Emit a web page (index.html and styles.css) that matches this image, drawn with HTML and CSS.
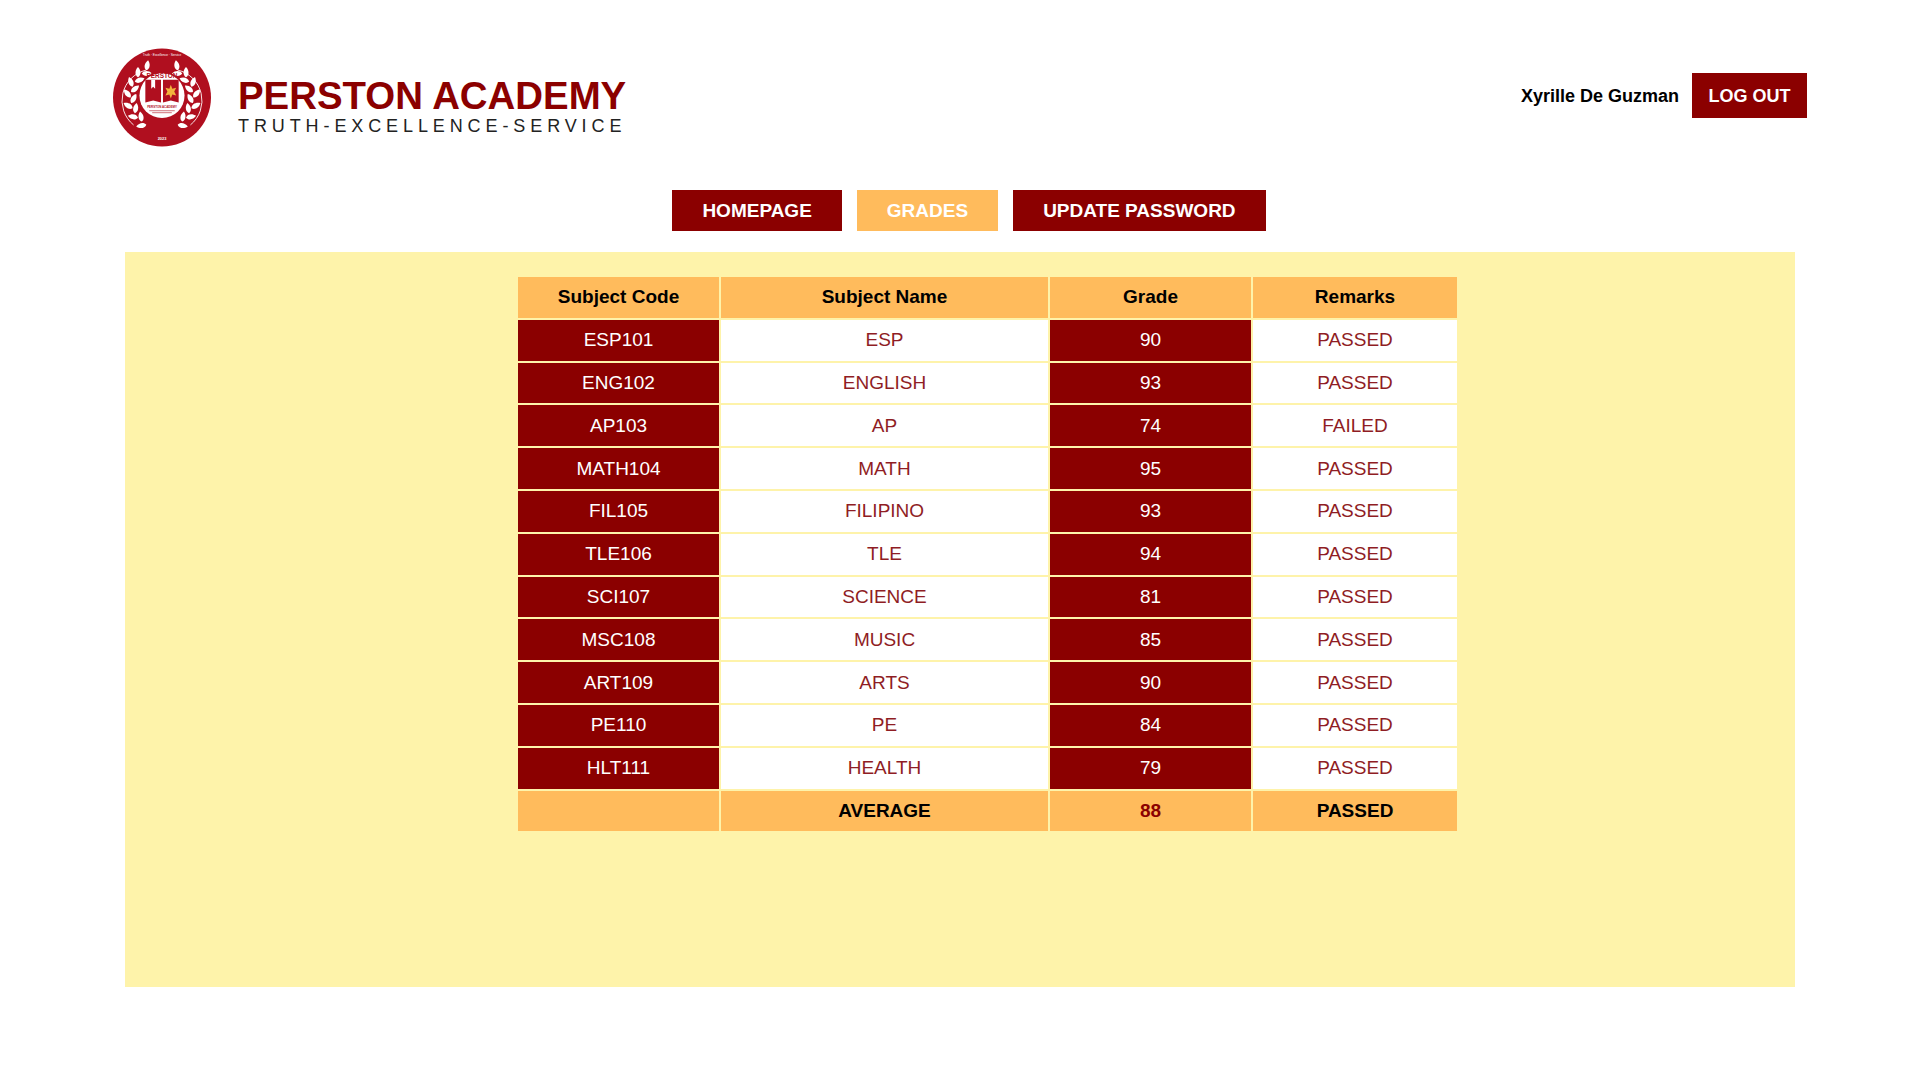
FILE: index.html
```html
<!DOCTYPE html>
<html lang="en">
  <head>
    <meta charset="UTF-8" />
    <meta name="viewport" content="width=device-width, initial-scale=1.0" />
    <title>Perston Academy - Grades</title>
    <link rel="stylesheet" href="styles.css">
  </head>
  <body>
    <header class="top-bar">
      <div class="brand">
        <svg class="logo" viewBox="0 0 100 100" aria-hidden="true">
          <defs>
            <path id="leaf" d="M0 0C3.4-2 3.4-7 0-10.5C-3.4-7-3.4-2 0 0Z" fill="#fff" />
            <g id="branch">
              <path d="M21 78A32 32 0 0 1 34 22" fill="none" stroke="#fff" stroke-width="0.9" />
              <use href="#leaf" transform="rotate(-150 50 50) translate(50 18) rotate(50)" />
              <use href="#leaf" transform="rotate(-130 50 50) translate(50 18) rotate(50)" />
              <use href="#leaf" transform="rotate(-110 50 50) translate(50 18) rotate(50)" />
              <use href="#leaf" transform="rotate(-90 50 50) translate(50 18) rotate(50)" />
              <use href="#leaf" transform="rotate(-70 50 50) translate(50 18) rotate(50)" />
              <use href="#leaf" transform="rotate(-50 50 50) translate(50 18) rotate(50)" />
              <use href="#leaf" transform="rotate(-30 50 50) translate(50 18) rotate(40)" />
              <use href="#leaf" transform="rotate(-140 50 50) translate(50 18) rotate(130)" />
              <use href="#leaf" transform="rotate(-120 50 50) translate(50 18) rotate(130)" />
              <use href="#leaf" transform="rotate(-100 50 50) translate(50 18) rotate(130)" />
              <use href="#leaf" transform="rotate(-80 50 50) translate(50 18) rotate(130)" />
              <use href="#leaf" transform="rotate(-60 50 50) translate(50 18) rotate(130)" />
              <use href="#leaf" transform="rotate(-40 50 50) translate(50 18) rotate(130)" />
            </g>
          </defs>
          <circle cx="50" cy="50" r="50" fill="#b00f1f" />
          <text x="50" y="8" class="logo-motto">Truth · Excellence · Service</text>
          <use href="#branch" />
          <use href="#branch" transform="translate(100 0) scale(-1 1)" />
          <circle cx="50" cy="48" r="23" fill="#fff" />
          <text x="50" y="30" class="logo-name">PERSTON</text>
          <path d="M33 32H49V55L41 53L33 55Z" fill="#b00f1f" />
          <path d="M51 32H67V55L59 53L51 55Z" fill="#b00f1f" />
          <path d="M59 37L60.5 41L64.5 40L62.5 44L64.5 48L60.5 47L59 51L57.5 47L53.5 48L55.5 44L53.5 40L57.5 41Z" fill="#f2b33d" />
          <path d="M39 32H43V41L41 39L39 41Z" fill="#fff" />
          <text x="50" y="60.5" class="logo-sub">PERSTON ACADEMY</text>
          <path d="M37 63.5H63M40 65.5H60" stroke="#b00f1f" stroke-width="0.6" />
          <text x="50" y="93" class="logo-year">2023</text>
        </svg>
        <div class="brand-text">
          <h1>PERSTON ACADEMY</h1>
          <p>TRUTH-EXCELLENCE-SERVICE</p>
        </div>
      </div>
      <div class="user-box">
        <span class="user-name">Xyrille De Guzman</span>
        <a href="#" class="btn logout">LOG OUT</a>
      </div>
    </header>

    <nav class="nav-items">
      <a href="#" class="btn">HOMEPAGE</a>
      <a href="#" class="btn active">GRADES</a>
      <a href="#" class="btn">UPDATE PASSWORD</a>
    </nav>

    <main class="panel">
      <table class="grades">
        <thead>
          <tr>
            <th class="col-code">Subject Code</th>
            <th class="col-name">Subject Name</th>
            <th class="col-grade">Grade</th>
            <th class="col-remarks">Remarks</th>
          </tr>
        </thead>
        <tbody>
          <tr><td class="dark">ESP101</td><td>ESP</td><td class="dark">90</td><td>PASSED</td></tr>
          <tr><td class="dark">ENG102</td><td>ENGLISH</td><td class="dark">93</td><td>PASSED</td></tr>
          <tr><td class="dark">AP103</td><td>AP</td><td class="dark">74</td><td>FAILED</td></tr>
          <tr><td class="dark">MATH104</td><td>MATH</td><td class="dark">95</td><td>PASSED</td></tr>
          <tr><td class="dark">FIL105</td><td>FILIPINO</td><td class="dark">93</td><td>PASSED</td></tr>
          <tr><td class="dark">TLE106</td><td>TLE</td><td class="dark">94</td><td>PASSED</td></tr>
          <tr><td class="dark">SCI107</td><td>SCIENCE</td><td class="dark">81</td><td>PASSED</td></tr>
          <tr><td class="dark">MSC108</td><td>MUSIC</td><td class="dark">85</td><td>PASSED</td></tr>
          <tr><td class="dark">ART109</td><td>ARTS</td><td class="dark">90</td><td>PASSED</td></tr>
          <tr><td class="dark">PE110</td><td>PE</td><td class="dark">84</td><td>PASSED</td></tr>
          <tr><td class="dark">HLT111</td><td>HEALTH</td><td class="dark">79</td><td>PASSED</td></tr>
        </tbody>
        <tfoot>
          <tr><td></td><td>AVERAGE</td><td class="avg-grade">88</td><td>PASSED</td></tr>
        </tfoot>
      </table>
    </main>
  </body>
</html>
```

FILE: styles.css
```css
* {
  margin: 0;
  padding: 0;
  box-sizing: border-box;
}

body {
  background: #fff;
  font-family: "Liberation Sans", Arial, sans-serif;
}

.top-bar {
  display: flex;
  justify-content: space-between;
  align-items: center;
  padding: 48px 113px 0 113px;
}

.brand {
  display: flex;
  align-items: center;
  gap: 27px;
}

.logo {
  width: 98px;
  height: 99px;
  display: block;
}

.logo text {
  font-family: "Liberation Sans", Arial, sans-serif;
  text-anchor: middle;
}

.logo-motto {
  font-size: 3.2px;
  fill: #fff;
}

.logo-name {
  font-size: 6.6px;
  font-weight: bold;
  fill: #b00f1f;
}

.logo-sub {
  font-size: 3px;
  font-weight: bold;
  fill: #b00f1f;
}

.logo-year {
  font-size: 4px;
  font-weight: bold;
  fill: #fff;
}

.brand-text {
  padding-top: 17px;
}

.brand-text h1 {
  font-size: 38.4px;
  line-height: 40px;
  font-weight: bold;
  color: #8b0000;
}

.brand-text p {
  font-size: 18px;
  line-height: 20px;
  letter-spacing: 4.9px;
  color: #222;
}

.user-box {
  display: flex;
  align-items: center;
  gap: 13px;
  margin-top: -5px;
}

.user-name {
  font-size: 18px;
  font-weight: bold;
  color: #000;
  padding-top: 2px;
}

.btn {
  display: block;
  background: #8b0000;
  color: #fff;
  font-size: 18px;
  font-weight: bold;
  text-decoration: none;
  text-align: center;
}

.logout {
  width: 115px;
  line-height: 44px;
  padding-top: 1px;
}

.nav-items {
  display: flex;
  justify-content: center;
  gap: 15px;
  margin-top: 43px;
  padding-left: 18px;
}

.nav-items .btn {
  font-size: 19px;
  line-height: 41px;
  padding: 0 30px;
}

.nav-items .btn.active {
  background: #ffbb5c;
}

.panel {
  margin: 21px 125px 0 125px;
  height: 735px;
  padding: 23px 0 0 391px;
  background: #fef3aa;
}

.grades {
  border-collapse: separate;
  border-spacing: 2px;
  table-layout: fixed;
  width: 941px;
  font-size: 19px;
  text-align: center;
}

.col-code {
  width: 201px;
}

.col-name {
  width: 327px;
}

.col-grade {
  width: 201px;
}

.col-remarks {
  width: 204px;
}

.grades th,
.grades tfoot td {
  background: #ffbb5c;
  color: #000;
  font-weight: bold;
  height: 40.8px;
}

.grades tbody td {
  background: #fff;
  color: #8f1d24;
  height: 40.8px;
}

.grades tbody td.dark {
  background: #8b0000;
  color: #fff;
}

.grades tfoot td.avg-grade {
  color: #8b0000;
}
```
